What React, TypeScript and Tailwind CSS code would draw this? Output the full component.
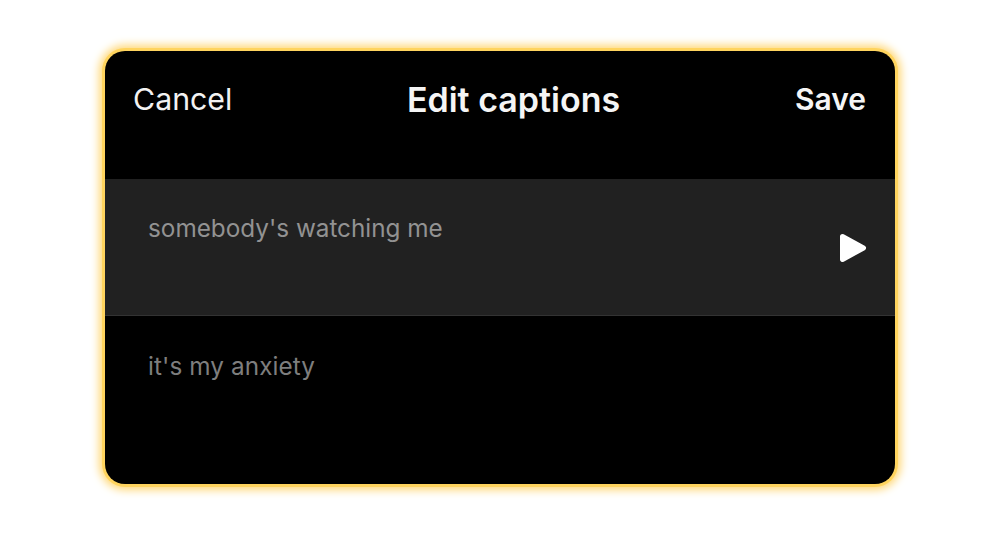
const font = "font-['Inter','Liberation_Sans',sans-serif]";

function PlayIcon() {
  return (
    <svg width="28" height="30" viewBox="0 0 28 30" className="block">
      <path
        d="M2.5 3.5 L23.5 15 L2.5 26.5 Z"
        fill="#fff"
        stroke="#fff"
        strokeWidth="5"
        strokeLinejoin="round"
      />
    </svg>
  );
}

const captions = ["somebody's watching me", "it's my anxiety"];

export default function App() {
  return (
    <div className={`flex h-[537px] w-[1000px] justify-center overflow-hidden bg-white pt-[51px] ${font}`}>
      <div className="flex h-[433px] w-[790px] flex-col overflow-hidden rounded-[20px] bg-black shadow-[0_0_0_3px_#ffd45e,0_0_8px_6px_#ffd878]">
        <div className="flex h-[128px] shrink-0 items-start justify-between pl-[28px] pr-[29px] pt-[29px]">
          <span className="w-[158px] text-[30.3px] leading-[38px] text-[#f2f2f2]">Cancel</span>
          <span className="text-[34px] font-semibold leading-[40px] text-[#f5f5f5]">Edit captions</span>
          <span className="w-[130px] text-right text-[30px] font-semibold leading-[38px] text-[#f5f5f5]">Save</span>
        </div>
        <div className="relative h-[137px] shrink-0 border-b border-[#333333] bg-[#212121] pl-[43px] pt-[33px]">
          <p className="text-[24.3px] leading-[32px] text-[#929292]">{captions[0]}</p>
          <div className="absolute right-[27px] top-[54px]">
            <PlayIcon />
          </div>
        </div>
        <div className="pl-[43px] pt-[34px]">
          <p className="text-[24.3px] leading-[32px] tracking-[0.1px] text-[#7e7e7e]">{captions[1]}</p>
        </div>
      </div>
    </div>
  );
}
